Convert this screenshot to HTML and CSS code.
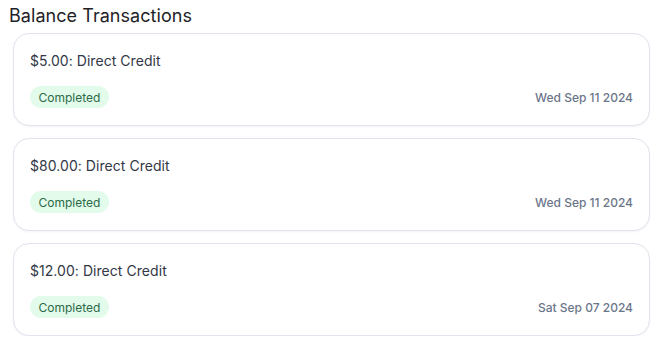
FILE: index.html
```html
<!DOCTYPE html>
<html>
<head>
<meta charset="utf-8">
<link rel="stylesheet" href="styles.css">
</head>
<body>
<div class="page">
  <h2 class="title">Balance Transactions</h2>
  <div class="list">
    <div class="card">
      <div class="desc">$5.00: Direct Credit</div>
      <div class="row">
        <span class="badge">Completed</span>
        <span class="date">Wed Sep 11 2024</span>
      </div>
    </div>
    <div class="card">
      <div class="desc">$80.00: Direct Credit</div>
      <div class="row">
        <span class="badge">Completed</span>
        <span class="date">Wed Sep 11 2024</span>
      </div>
    </div>
    <div class="card">
      <div class="desc">$12.00: Direct Credit</div>
      <div class="row">
        <span class="badge">Completed</span>
        <span class="date">Sat Sep 07 2024</span>
      </div>
    </div>
  </div>
</div>
</body>
</html>
```

FILE: styles.css
```css
* { box-sizing: border-box; }
body {
  margin: 0;
  background: #ffffff;
  font-family: Inter, "Noto Sans", sans-serif;
}
.page {
  padding: 5px 11px 0 9px;
}
.title {
  margin: 0;
  font-size: 18px;
  font-weight: 400;
  line-height: 22px;
  color: #1f2328;
  letter-spacing: 0.05px;
}
.list {
  margin: 6px 0 0 4px;
  display: flex;
  flex-direction: column;
  gap: 12px;
}
.card {
  border: 1px solid #e1e3ee;
  border-radius: 16px;
  padding: 16px 16px 17px 16px;
  box-shadow: 0 1px 2px rgba(30, 40, 80, 0.05);
  background: #fff;
}
.desc {
  font-size: 14px;
  line-height: 22px;
  color: #323846;
  letter-spacing: 0.05px;
}
.row {
  margin-top: 14px;
  display: flex;
  justify-content: space-between;
  align-items: center;
}
.badge {
  display: inline-flex;
  align-items: center;
  height: 22px;
  padding: 0 8.5px;
  border-radius: 11px;
  background: #e3fbea;
  color: #2b6a47;
  font-size: 12px;
}
.date {
  font-size: 12px;
  color: #6b7689;
  font-weight: 500;
}
```
